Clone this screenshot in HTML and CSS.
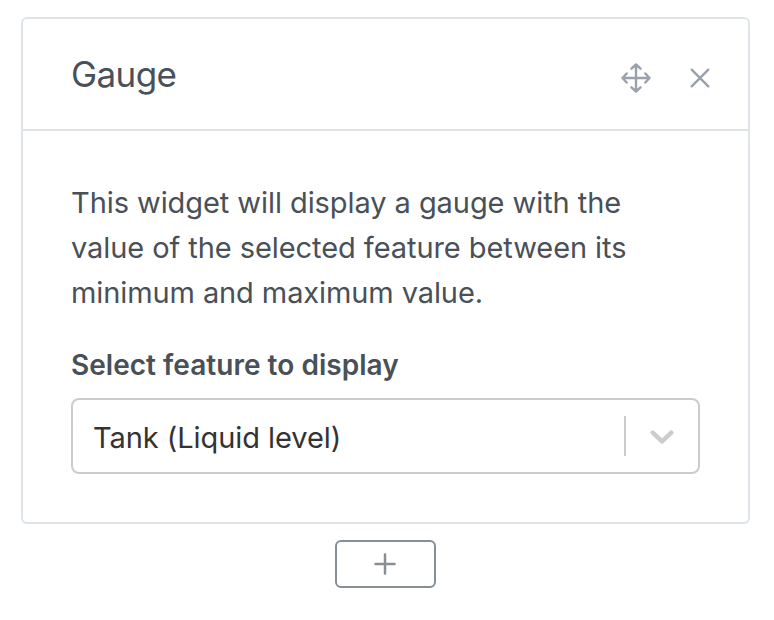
FILE: index.html
```html
<!DOCTYPE html>
<html lang="en">
<head>
<meta charset="utf-8">
<title>Gauge</title>
<link rel="stylesheet" href="styles.css">
</head>
<body>
<section class="card">
  <header class="card-header">
    <h3 class="title">Gauge</h3>
    <div class="actions">
      <svg class="move" viewBox="0 0 30 30"><path d="M15 2V28M2 15H28M10.500 5.700L15 1.500L19.500 5.700M10.500 24.300L15 28.500L19.500 24.300M5.700 10.500L1.500 15L5.700 19.500M24.300 10.500L28.500 15L24.300 19.500"/></svg>
      <svg class="close" viewBox="0 0 20 20"><path d="M1.700 1.700L18.300 18.300M18.300 1.700L1.700 18.300"/></svg>
    </div>
  </header>
  <div class="card-body">
    <p class="description"><span>This widget will display a gauge with the</span><br><span>value of the selected feature between its</span><br><span class="last-line">minimum and maximum value.</span></p>
    <div class="label"><span>Select feature to display</span></div>
    <div class="select">
      <span class="value">Tank (Liquid level)</span>
      <div class="indicator"><svg class="chevron" viewBox="0 0 24 14"><path d="M2.700 2.700L12 11.300L21.300 2.700"/></svg></div>
    </div>
  </div>
</section>
<button class="add" aria-label="Add widget"><svg viewBox="0 0 22 22"><path d="M11 1.500V20.500M1.500 11H20.500"/></svg></button>
</body>
</html>
```
FILE: styles.css
```css
* { box-sizing: border-box; }
body { margin: 0; padding: 17px 24px 0 21px; background: #fff; color: #495057; font-family: Inter, sans-serif; }
.card { width: 729px; height: 507px; border: 2px solid #dfe3ea; border-radius: 6px; }
.card-header { height: 112px; border-bottom: 2px solid #dfe3ea; padding: 0 38px 0 48px; display: flex; align-items: center; justify-content: space-between; }
.title { margin: 0; padding-bottom: 1px; font-size: 35px; font-weight: 400; line-height: 44px; letter-spacing: -0.6px; }
.actions { display: flex; align-items: center; gap: 39px; padding-top: 7px; }
svg { display: block; fill: none; stroke-linecap: round; stroke-linejoin: round; }
.move { width: 30px; height: 30px; stroke: #9aa0ac; stroke-width: 2.4; }
.close { width: 20px; height: 20px; stroke: #9aa0ac; stroke-width: 2.4; }
.card-body { padding: 49px 48px 0; }
.description { margin: 0; font-size: 29px; line-height: 45px; letter-spacing: -0.07px; white-space: nowrap; }
.last-line { letter-spacing: -0.1px; }
.label { margin: 28px 0 10px; font-size: 28px; font-weight: 600; line-height: 45px; letter-spacing: 0.03px; }
.select { height: 76px; border: 2px solid #ccc; border-radius: 8px; padding-left: 20px; display: flex; align-items: center; justify-content: space-between; }
.value { padding-top: 2px; color: #333; font-size: 29px; letter-spacing: -0.07px; }
.indicator { width: 74px; height: 40px; border-left: 2px solid #ccc; display: flex; align-items: center; justify-content: center; }
.chevron { width: 24px; height: 14px; margin-top: 2px; stroke: #ccc; stroke-width: 4.5; }
.add { margin: 16px auto 0 314px; width: 101px; height: 48px; border: 2px solid #868e96; border-radius: 6px; background: #fff; padding: 0 1px 0 0; display: flex; align-items: center; justify-content: center; }
.add svg { width: 22px; height: 22px; stroke: #868e96; stroke-width: 2.5; }
```
